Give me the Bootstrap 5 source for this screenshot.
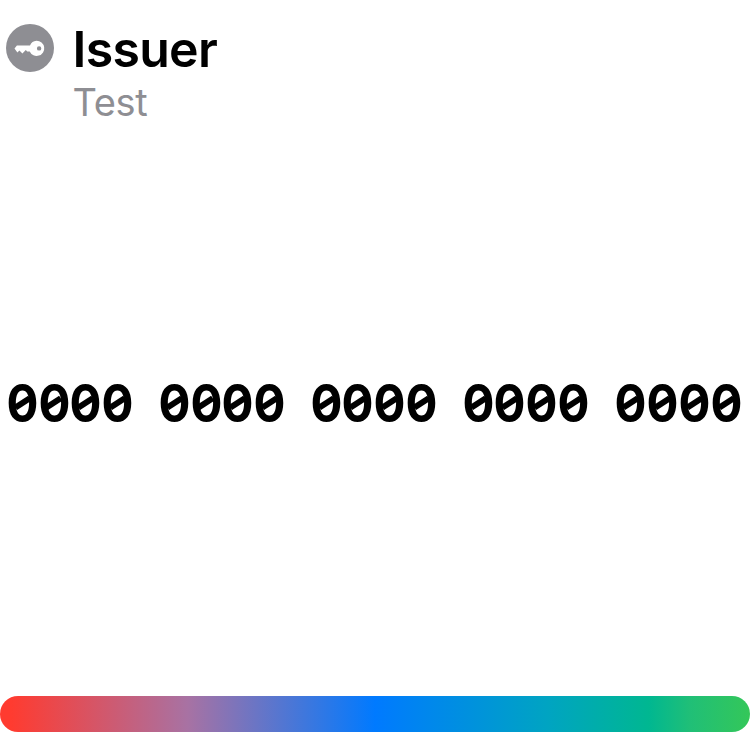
<!DOCTYPE html>
<html lang="en">
<head>
<meta charset="utf-8">
<meta name="viewport" content="width=device-width, initial-scale=1">
<title>Issuer</title>
<link href="https://cdn.jsdelivr.net/npm/bootstrap@5.3.0/dist/css/bootstrap.min.css" rel="stylesheet">
<style>
body { font-family: Inter, Roboto, sans-serif; background: #fff; color: #000; }
.token { height: 750px; padding: 24px 0 18px; }
.token-head { gap: 18.5px; padding-left: 6px; height: 100px; }
.issuer { font-size: 50px; line-height: 50px; font-weight: 600; letter-spacing: -.7px; }
.account { font-size: 38px; line-height: 44px; margin-top: 6px; color: #8e8e93; letter-spacing: -.3px; }
.code { font-size: 51.5px; line-height: 60px; font-weight: 650; padding-left: 6.4px; gap: 25.2px; margin-top: 249px; }
.group { --pitch: 31.7px; }
.group:last-child { --pitch: 32.1px; }
.digit { position: relative; width: var(--pitch); display: flex; justify-content: center; }
.digit span { transform: translateY(-.5px) scale(.92, 1.02); }
/* short slash inside the counter of the zero */
.digit::after { content: ""; position: absolute; left: 50%; top: 50%; width: 17px; height: 5.6px; margin: -2.8px 0 0 -8.5px; background: #000; transform: rotate(-33deg); }
.timer { height: 36px; border-radius: 18px; background: linear-gradient(90deg, #ff3b30 0, #ff3b30 1.5%, #a872a3 25%, #007aff 50%, #00a4c2 73%, #00b791 86.5%, #20bf77 92%, #34c759 100%); }
</style>
</head>
<body>
<main class="token d-flex flex-column overflow-hidden">
  <header class="token-head d-flex align-items-start">
    <svg class="flex-shrink-0" width="48" height="48" viewBox="0 0 48 48" aria-hidden="true">
      <circle cx="24" cy="24" r="24" fill="#8e8e93"/>
      <path fill="#fff" fill-rule="evenodd" d="M30.5 16.7a7.6 7.6 0 1 1-6.8 10.7h-1.2l-1.3.1-1.4-1.5-3.4 3.4-3-3-2 2-2.9-4 2.4-3H24a7.6 7.6 0 0 1 6.5-4.7ZM33.1 22.2a2.2 2.2 0 1 0 0 4.4 2.2 2.2 0 0 0 0-4.4Z"/>
    </svg>
    <div>
      <h1 class="issuer m-0">Issuer</h1>
      <div class="account">Test</div>
    </div>
  </header>
  <div class="code d-flex">
    <div class="group d-flex"><div class="digit"><span>0</span></div><div class="digit"><span>0</span></div><div class="digit"><span>0</span></div><div class="digit"><span>0</span></div></div>
    <div class="group d-flex"><div class="digit"><span>0</span></div><div class="digit"><span>0</span></div><div class="digit"><span>0</span></div><div class="digit"><span>0</span></div></div>
    <div class="group d-flex"><div class="digit"><span>0</span></div><div class="digit"><span>0</span></div><div class="digit"><span>0</span></div><div class="digit"><span>0</span></div></div>
    <div class="group d-flex"><div class="digit"><span>0</span></div><div class="digit"><span>0</span></div><div class="digit"><span>0</span></div><div class="digit"><span>0</span></div></div>
    <div class="group d-flex"><div class="digit"><span>0</span></div><div class="digit"><span>0</span></div><div class="digit"><span>0</span></div><div class="digit"><span>0</span></div></div>
  </div>
  <div class="timer mt-auto"></div>
</main>
<script src="https://cdn.jsdelivr.net/npm/bootstrap@5.3.0/dist/js/bootstrap.bundle.min.js"></script>
</body>
</html>
